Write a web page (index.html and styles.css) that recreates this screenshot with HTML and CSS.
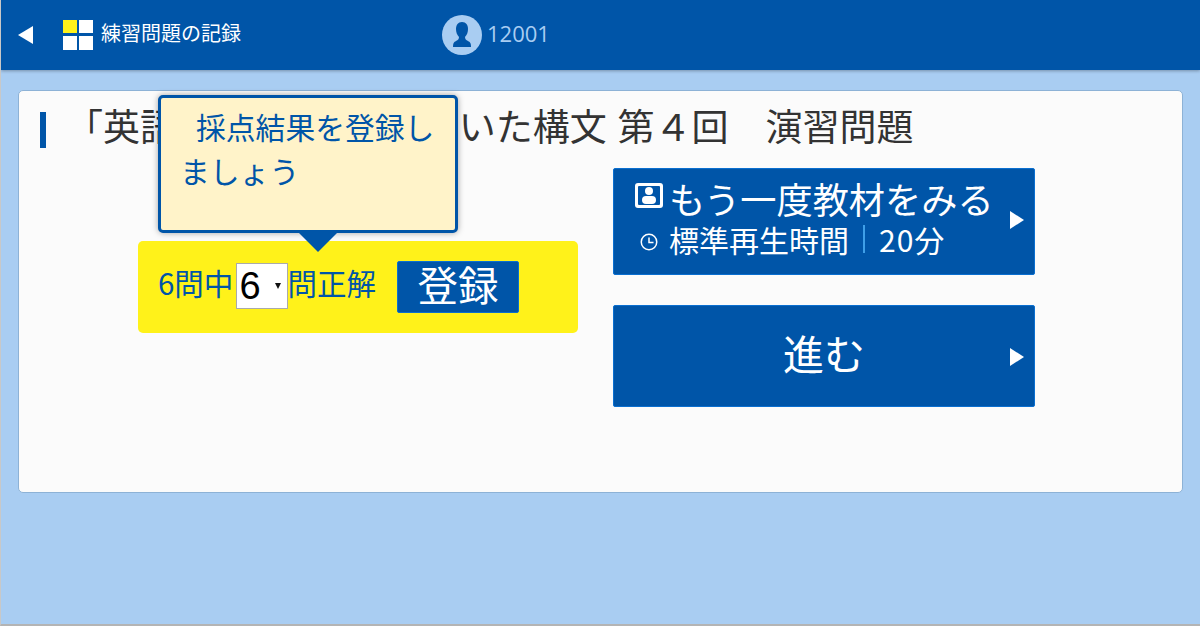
FILE: index.html

```html
<!DOCTYPE html>
<html lang="ja">
<head>
  <meta charset="UTF-8" />
  <title>練習問題の記録</title>
  <link rel="stylesheet" href="styles.css">
</head>
<body>
  <header class="topbar">
    <svg class="back-icon" width="15" height="18" viewBox="0 0 15 18"><path d="M15 0V18L0 9Z" fill="#fff"/></svg>
    <div class="tiles">
      <span class="tile tile-on"></span><span class="tile"></span><span class="tile"></span><span class="tile"></span>
    </div>
    <span class="page-name">練習問題の記録</span>
    <div class="user">
      <svg class="avatar" width="40" height="40" viewBox="0 0 40 40">
        <circle cx="20" cy="20" r="20" fill="#a9cdf2"/>
        <path d="M20 7c-4 0-6 3-6 7 0 3 1 6 3 8 0 2-1 3-3 4-2 1-3 2-3 6h18c0-4-1-5-3-6-2-1-3-2-3-4 2-2 3-5 3-8 0-4-2-7-6-7Z" fill="#0055a8"/>
      </svg>
      <span class="user-id">12001</span>
    </div>
  </header>

  <main class="card">
    <h1 class="title">「英語の基本5&#8202;文型を用いた構文 &#8202;第４回　演習問題</h1>
    <div class="columns">
      <div class="left">
        <div class="tooltip">
          <p>採点結果を登録しましょう</p>
        </div>
        <form class="score">
          <span>6問中</span>
          <div class="select">6<i class="caret"></i></div>
          <span>問正解</span>
          <button type="button" class="register">登録</button>
        </form>
      </div>
      <div class="right">
        <a class="btn btn-review">
          <span class="line-main">
            <svg class="material-icon" width="28" height="25" viewBox="0 0 28 25">
              <rect width="28" height="25" rx="3" fill="#fff"/>
              <rect x="3" y="3" width="22" height="19" rx="1" fill="#0055a8"/>
              <circle cx="14" cy="8" r="4" fill="#fff"/>
              <rect x="7" y="13" width="14" height="8" rx="4" fill="#fff"/>
            </svg>
            もう一度教材をみる
          </span>
          <span class="line-sub">
            <svg class="clock" width="18" height="18" viewBox="0 0 18 18" fill="none" stroke="#fff">
              <circle cx="9" cy="9" r="7.750" stroke-width="1.500"/>
              <path d="M9 4.500v5h4.500" stroke-width="1.500"/>
            </svg>
            標準再生時間<i class="sep"></i><span class="duration">20分</span>
          </span>
          <i class="arrow"></i>
        </a>
        <a class="btn btn-next">進む<i class="arrow"></i></a>
      </div>
    </div>
  </main>
</body>
</html>
```

FILE: styles.css

```css
html, body {
  height: 100%;
}
body {
  margin: 0;
  box-sizing: border-box;
  height: 626px;
  overflow: hidden;
  background: #a9cdf2;
  border-left: 1px solid #c8c8c8;
  border-bottom: 2px solid #b4b4b4;
  font-family: "Noto Sans CJK JP", "Open Sans", sans-serif;
  color: #333;
}
.topbar {
  display: flex;
  align-items: center;
  height: 70px;
  background: #0055a8;
  box-shadow: 0 1px 3px rgba(0,0,0,0.3);
  color: #fff;
}
.back-icon {
  margin-left: 17px;
}
.tiles {
  display: grid;
  grid-template-columns: 14px 14px;
  grid-template-rows: 13px 14px;
  column-gap: 2px;
  row-gap: 3px;
  margin-left: 30px;
}
.tile {
  background: #fff;
}
.tile-on {
  background: #fff21a;
}
.page-name {
  margin-left: 8px;
  margin-bottom: 6px;
  font-size: 20px;
}
.user {
  display: flex;
  align-items: center;
  margin-left: 201px;
}
.user-id {
  margin-left: 5px;
  margin-bottom: 4px;
  font-family: "Open Sans", sans-serif;
  font-size: 22px;
  color: #a9cdf2;
}
.card {
  box-sizing: border-box;
  height: 403px;
  margin: 20px 17px 0;
  padding: 16px 0 0 21px;
  background: #fbfbfb;
  border: 1px solid #8db2d6;
  border-radius: 5px;
}
.title {
  margin: 5px 0 0;
  padding-left: 20px;
  height: 36px;
  line-height: 26px;
  border-left: 6px solid #0055a8;
  font-size: 37px;
  font-weight: 400;
  white-space: nowrap;
}
.columns {
  display: flex;
  margin-top: 20px;
}
.left {
  position: relative;
  width: 440px;
  margin-left: 98px;
  padding-top: 73px;
}
.tooltip {
  position: absolute;
  left: 20px;
  top: -73px;
  box-sizing: border-box;
  width: 300px;
  height: 138px;
  padding: 6px 19px;
  background: #fff3c9;
  border: 3px solid #0055a8;
  border-radius: 5px;
  box-shadow: 0 0 6px rgba(0,0,0,0.35);
  color: #0055a8;
  font-size: 29.8px;
  line-height: 44px;
}
.tooltip p {
  margin: 0;
  text-indent: 16px;
}
.tooltip::after {
  content: "";
  position: absolute;
  left: 137px;
  bottom: -22px;
  border-top: 20px solid #0055a8;
  border-left: 20px solid transparent;
  border-right: 20px solid transparent;
}
.score {
  display: flex;
  align-items: center;
  box-sizing: border-box;
  height: 92px;
  margin: 0;
  padding: 0 0 3px 20px;
  background: #fff21a;
  border-radius: 5px;
  color: #0055a8;
  font-size: 29.5px;
}
.score span {
  margin-bottom: 8px;
}
.select {
  position: relative;
  box-sizing: border-box;
  width: 52px;
  height: 46px;
  padding-left: 2px;
  margin: 0 -1px 0 3px;
  background: #fff;
  border: 1px solid #aaa;
  color: #000;
  font-family: "Liberation Sans", sans-serif;
  font-size: 38px;
  line-height: 44px;
}
.caret {
  position: absolute;
  right: 6px;
  top: 19px;
  border-top: 6px solid #111;
  border-left: 3px solid transparent;
  border-right: 3px solid transparent;
}
.register {
  width: 122px;
  height: 52px;
  margin: 2px 0 0 21px;
  padding: 0 0 8px;
  background: #0055a8;
  border: 1px solid #0a6fd0;
  border-radius: 2px;
  color: #fff;
  font-family: inherit;
  font-size: 40.5px;
  line-height: 44px;
}
.right {
  display: flex;
  flex-direction: column;
  gap: 30px;
  width: 422px;
  margin-left: 35px;
}
.btn {
  position: relative;
  box-sizing: border-box;
  display: flex;
  background: #0055a8;
  border: 1px solid #0a6fd0;
  border-radius: 2px;
  color: #fff;
}
.btn-review {
  flex-direction: column;
  height: 107px;
  padding: 7px 0 0 21px;
}
.line-main {
  display: flex;
  align-items: center;
  font-size: 36.2px;
  line-height: 44px;
}
.material-icon {
  margin: 0 6px 5px 0;
}
.line-sub {
  display: flex;
  align-items: center;
  margin-top: -1px;
  font-size: 30px;
  line-height: 40px;
}
.clock {
  margin: 5px 11px 0 5px;
}
.sep {
  width: 2px;
  height: 28px;
  margin: 0 14px;
  background: #3f9fe8;
}
.duration {
  letter-spacing: 1px;
}
.btn-next {
  align-items: center;
  justify-content: center;
  height: 102px;
  padding-bottom: 8px;
  font-size: 41px;
}
.arrow {
  position: absolute;
  right: 10px;
  top: 42px;
  border-left: 14px solid #fff;
  border-top: 9px solid transparent;
  border-bottom: 9px solid transparent;
}
```
